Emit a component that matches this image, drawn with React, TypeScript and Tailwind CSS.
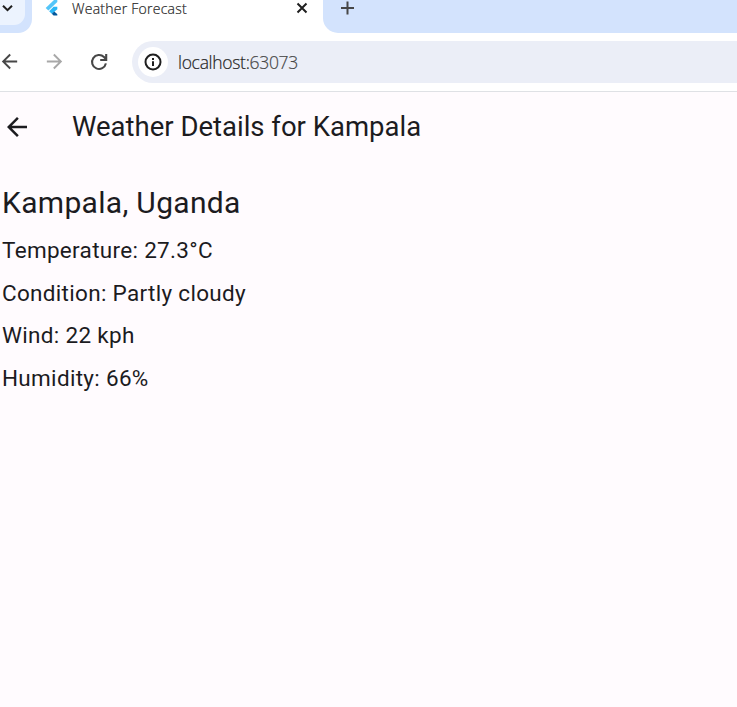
import React from "react";

function ArrowBack({ className }: { className: string }) {
  return (
    <svg viewBox="0 0 24 24" fill="currentColor" className={className}>
      <path d="M20 11H7.83l5.59-5.59L12 4l-8 8 8 8 1.41-1.41L7.83 13H20v-2z" />
    </svg>
  );
}

function FlutterLogo() {
  return (
    <svg viewBox="0 0 24 24" className="h-5 w-5 shrink-0">
      <path d="M12 2.5 2 12l3.2 3L16 4.8V2.5z" fill="#54c5f8" />
      <path d="M11.5 10.5 6.2 15.8l3.2 3.2 6.6-5.6v-2.9z" fill="#29b6f6" />
      <path d="m9.4 19 2.1 2.1H16v-1.5l-3.6-3.3z" fill="#01579b" />
    </svg>
  );
}

function TabStrip() {
  return (
    <div className="flex h-[33px] shrink-0 overflow-hidden bg-[#d3e3fd]">
      <div className="w-8 shrink-0 bg-white">
        <div className="h-[33px] rounded-br-[14px] bg-[#d3e3fd]">
          <div className="h-[25px] w-[25px] rounded-br-[11px] bg-[#ecf3fe] pl-[1px] pt-[1px]">
            <svg viewBox="0 0 14 14" fill="none" stroke="#1f1f1f" strokeWidth="2" className="h-[14px] w-[14px]">
              <path d="m2 4.7 4.5 4.5L11 4.7" />
            </svg>
          </div>
        </div>
      </div>
      <div className="flex h-[33px] w-[291px] shrink-0 bg-white pl-[12px]">
        <div className="-mt-[2px]">
          <FlutterLogo />
        </div>
        <span className="-mt-px ml-[8px] w-[223px] whitespace-nowrap font-['Open_Sans',sans-serif] text-[14px] font-light leading-5 tracking-[0.25px] text-[#1f1f1f] [-webkit-text-stroke:0.2px]">
          Weather Forecast
        </span>
        <svg viewBox="0 0 14 14" fill="none" stroke="#1f1f1f" strokeWidth="2" className="mt-px h-[14px] w-[14px] shrink-0">
          <path d="m2.5 2.5 9 9m0-9-9 9" />
        </svg>
      </div>
      <div className="flex-1 bg-white">
        <div className="h-[33px] rounded-bl-[15px] bg-[#d3e3fd] pl-4">
          <svg viewBox="0 0 16 16" fill="none" stroke="#474747" strokeWidth="2" className="h-4 w-4">
            <path d="M2 8h13M8.5 1.5v13" />
          </svg>
        </div>
      </div>
    </div>
  );
}

function Toolbar() {
  return (
    <div className="flex h-[59px] shrink-0 items-start border-b border-[#dfe1e5] bg-white pt-2">
      <ArrowBack className="-ml-[2px] mt-[9px] h-[23px] w-[23px] shrink-0 text-[#474747]" />
      <ArrowBack className="ml-[22px] mt-[9px] h-[23px] w-[23px] shrink-0 rotate-180 text-[#a8a8a8]" />
      <svg viewBox="0 0 24 24" fill="none" stroke="#474747" strokeWidth="2.1" className="ml-[21px] mt-[9px] h-6 w-6 shrink-0">
        <path d="M18.9 13.4A7 7 0 1 1 17 7l2.3 2.6M19.2 4v6h-6" />
      </svg>
      <div className="ml-[21px] flex h-[42px] flex-1 items-center rounded-l-full bg-[#ebeef7] pl-[6px]">
        <div className="flex h-[30px] w-[30px] items-center justify-center rounded-full bg-white">
          <svg viewBox="0 0 18 18" fill="none" stroke="#1f1f1f" strokeWidth="2" className="h-[18px] w-[18px]">
            <circle cx="9" cy="9" r="7.5" />
            <path d="M9 8.3V13M9 5v2" />
          </svg>
        </div>
        <span className="ml-[10px] whitespace-nowrap font-['Open_Sans',sans-serif] text-[17.5px] font-light tracking-[-0.3px] text-[#1f1f1f] [-webkit-text-stroke:0.2px]">
          localhost:<span className="text-[#474747]">63073</span>
        </span>
      </div>
    </div>
  );
}

const details = [
  "Temperature: 27.3°C",
  "Condition: Partly cloudy",
  "Wind: 22 kph",
  "Humidity: 66%",
];

export default function App() {
  return (
    <div className="flex h-[707px] w-[737px] flex-col overflow-hidden bg-[#fffbfe]">
      <TabStrip />
      <Toolbar />
      <main className="flex-1 font-[Roboto,sans-serif] text-[#1c1b1f]">
        <header className="flex h-[70px] items-center">
          <ArrowBack className="ml-[2px] h-[30px] w-[30px]" />
          <h1 className="-mt-[2px] ml-[40px] whitespace-nowrap text-[27.5px] leading-[35px]">Weather Details for Kampala</h1>
        </header>
        <section className="pl-[2px] pt-[19px]">
          <h2 className="text-[30px] leading-[43px] tracking-[0.31px]">Kampala, Uganda</h2>
          <ul className="mt-[10px] flex flex-col gap-[10.5px] text-[22.5px] leading-[32.2px] tracking-[0.31px]">
            {details.map((line) => (
              <li key={line}>{line}</li>
            ))}
          </ul>
        </section>
      </main>
    </div>
  );
}
